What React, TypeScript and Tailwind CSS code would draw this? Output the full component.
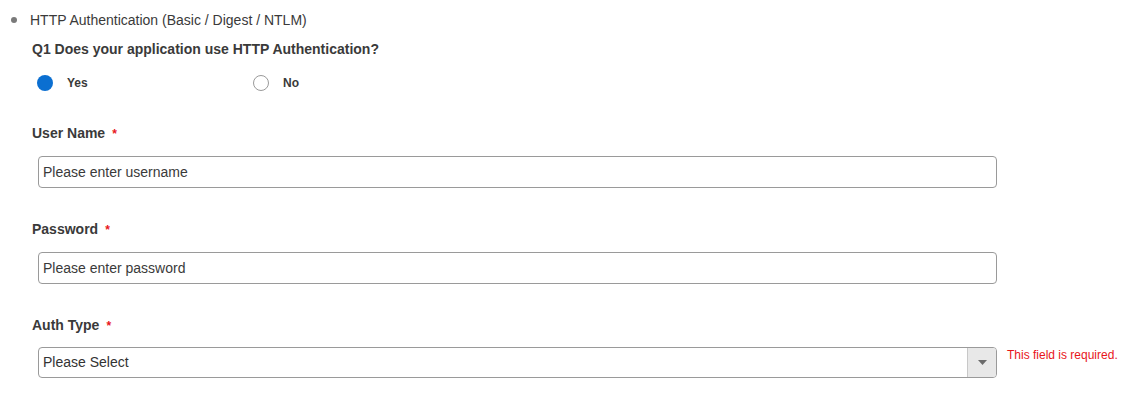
import React, { useState } from "react"

const font = { fontFamily: '"Liberation Sans", Arial, sans-serif' }

const Label = ({ text }: { text: string }) => (
  <div className="flex items-start h-[18px] ml-[32px] text-[14px] leading-[18px] font-bold text-[#3a3a3a]">
    <span>{text}</span>
    <span className="ml-[7px] mt-[3px] text-[12px] leading-[14px] text-[#e8151b]">*</span>
  </div>
)

const TextField = ({ placeholder }: { placeholder: string }) => (
  <input
    type="text"
    placeholder={placeholder}
    className="ml-[38px] w-[959px] h-[32px] px-[4px] border border-[#9a9a9a] rounded-[4px] text-[14px] text-[#333] placeholder:text-[#3a3a3a] bg-white outline-none"
    style={font}
  />
)

const Radio = ({
  label,
  checked,
  onClick,
}: {
  label: string
  checked: boolean
  onClick: () => void
}) => (
  <button
    className="flex items-center h-[16px] w-[216px] cursor-pointer"
    onClick={onClick}
  >
    {checked ? (
      <span className="w-[16px] h-[16px] rounded-full bg-[#0b6fd1]" />
    ) : (
      <span className="w-[16px] h-[16px] rounded-full border border-[#9a9a9a] bg-white" />
    )}
    <span className="ml-[14px] text-[12px] font-bold text-[#3a3a3a]">{label}</span>
  </button>
)

export default function App() {
  const [answer, setAnswer] = useState("yes")

  return (
    <div className="w-[1140px] h-[394px] bg-white pt-[11px]" style={font}>
      <div className="flex items-center h-[18px]">
        <span className="ml-[11px] w-[6px] h-[6px] rounded-full bg-[#7a7a7a]" />
        <span className="ml-[13px] text-[14px] leading-[18px] text-[#3a3a3a]">
          HTTP Authentication (Basic / Digest / NTLM)
        </span>
      </div>

      <div className="mt-[11px] ml-[32px] h-[18px] text-[14px] leading-[18px] font-bold text-[#3a3a3a]">
        Q1 Does your application use HTTP Authentication?
      </div>

      <div className="flex mt-[17px] ml-[37px]">
        <Radio label="Yes" checked={answer === "yes"} onClick={() => setAnswer("yes")} />
        <Radio label="No" checked={answer === "no"} onClick={() => setAnswer("no")} />
      </div>

      <div className="mt-[33px]">
        <Label text="User Name" />
      </div>
      <div className="mt-[14px]">
        <TextField placeholder="Please enter username" />
      </div>

      <div className="mt-[32px]">
        <Label text="Password" />
      </div>
      <div className="mt-[14px]">
        <TextField placeholder="Please enter password" />
      </div>

      <div className="mt-[32px]">
        <Label text="Auth Type" />
      </div>
      <div className="flex items-start mt-[13px]">
        <div className="ml-[38px] w-[959px] h-[31px] flex border border-[#9a9a9a] rounded-[4px] overflow-hidden bg-white">
          <div className="flex-1 flex items-center px-[4px] text-[14px] text-[#333]">
            Please Select
          </div>
          <div className="w-[29px] flex items-center justify-center border-l border-[#c8c8c8] bg-[#e8e8e8]">
            <svg width="9" height="5" viewBox="0 0 9 5">
              <path d="M0 0 H9 L4.5 5 Z" fill="#6b6b6b" />
            </svg>
          </div>
        </div>
        <span className="ml-[10px] mt-[1px] text-[12px] leading-[14px] text-[#e8151b]">
          This field is required.
        </span>
      </div>
    </div>
  )
}
